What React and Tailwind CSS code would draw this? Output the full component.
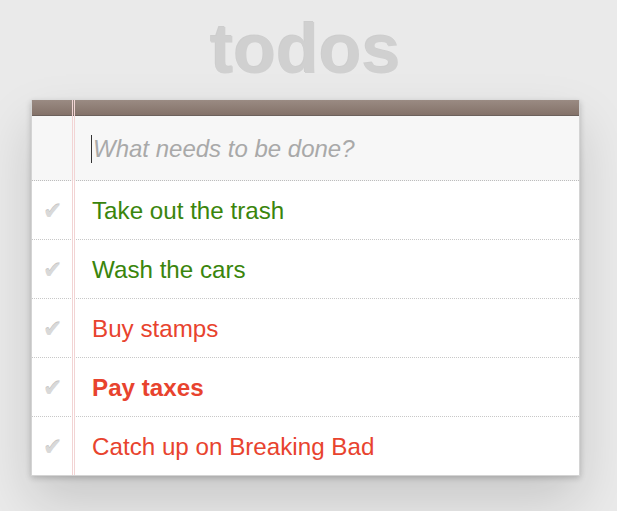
import React from "react";

const todos = [
  { text: "Take out the trash", cls: "text-[#3a850c]" },
  { text: "Wash the cars", cls: "text-[#3a850c]" },
  { text: "Buy stamps", cls: "text-[#e8432e]" },
  { text: "Pay taxes", cls: "text-[#e8432e] font-bold" },
  { text: "Catch up on Breaking Bad", cls: "text-[#e8432e]" },
];

export default function App() {
  return (
    <div
      className="min-h-[511px] w-full bg-[#eaeaea] pl-[31px]"
      style={{ fontFamily: "'Liberation Sans', Arial, sans-serif" }}
    >
      <div className="w-[549px]">
        <h1 className="h-[100px] pt-[5px] text-center text-[70px] font-bold leading-[88px] text-[#d0d0d0] [text-shadow:-1px_-1px_rgba(0,0,0,0.12)]">
          todos
        </h1>
        <div className="relative bg-white border border-[#d4d4d4] border-t-0 shadow-[0_2px_6px_0_rgba(0,0,0,0.2),0_25px_50px_0_rgba(0,0,0,0.15)]">
          <div className="h-[16px] border-b border-[#6c615c] bg-gradient-to-b from-[#9a8b83] to-[#847269]" />
          <div className="pointer-events-none absolute left-[40px] top-0 bottom-0 w-[3px] border-x border-[#f2d4d4]" />
          <div className="flex h-[65px] items-center bg-[#f7f7f7] border-b border-dotted border-[#bdbdbd] pl-[59px] pt-[2px]">
            <span className="mr-[1px] h-[28px] w-[1px] bg-[#333]" />
            <span className="text-[24px] italic text-[#a9a9a9]">What needs to be done?</span>
          </div>
          {todos.map((t, i) => (
            <div
              key={i}
              className={`flex items-center pt-[2px] ${i < todos.length - 1 ? "h-[59px] border-b border-dotted border-[#c8c8c8]" : "h-[58px]"}`}
            >
              <span className="w-[40px] pl-[11px] text-[23px] text-[#d9d9d9] [text-shadow:0_-1px_0_#c4c4c4]" style={{ fontFamily: "'DejaVu Sans', sans-serif" }}>
                ✔
              </span>
              <span className={`pl-[20px] text-[24.2px] ${t.cls}`}>{t.text}</span>
            </div>
          ))}
        </div>
      </div>
    </div>
  );
}
